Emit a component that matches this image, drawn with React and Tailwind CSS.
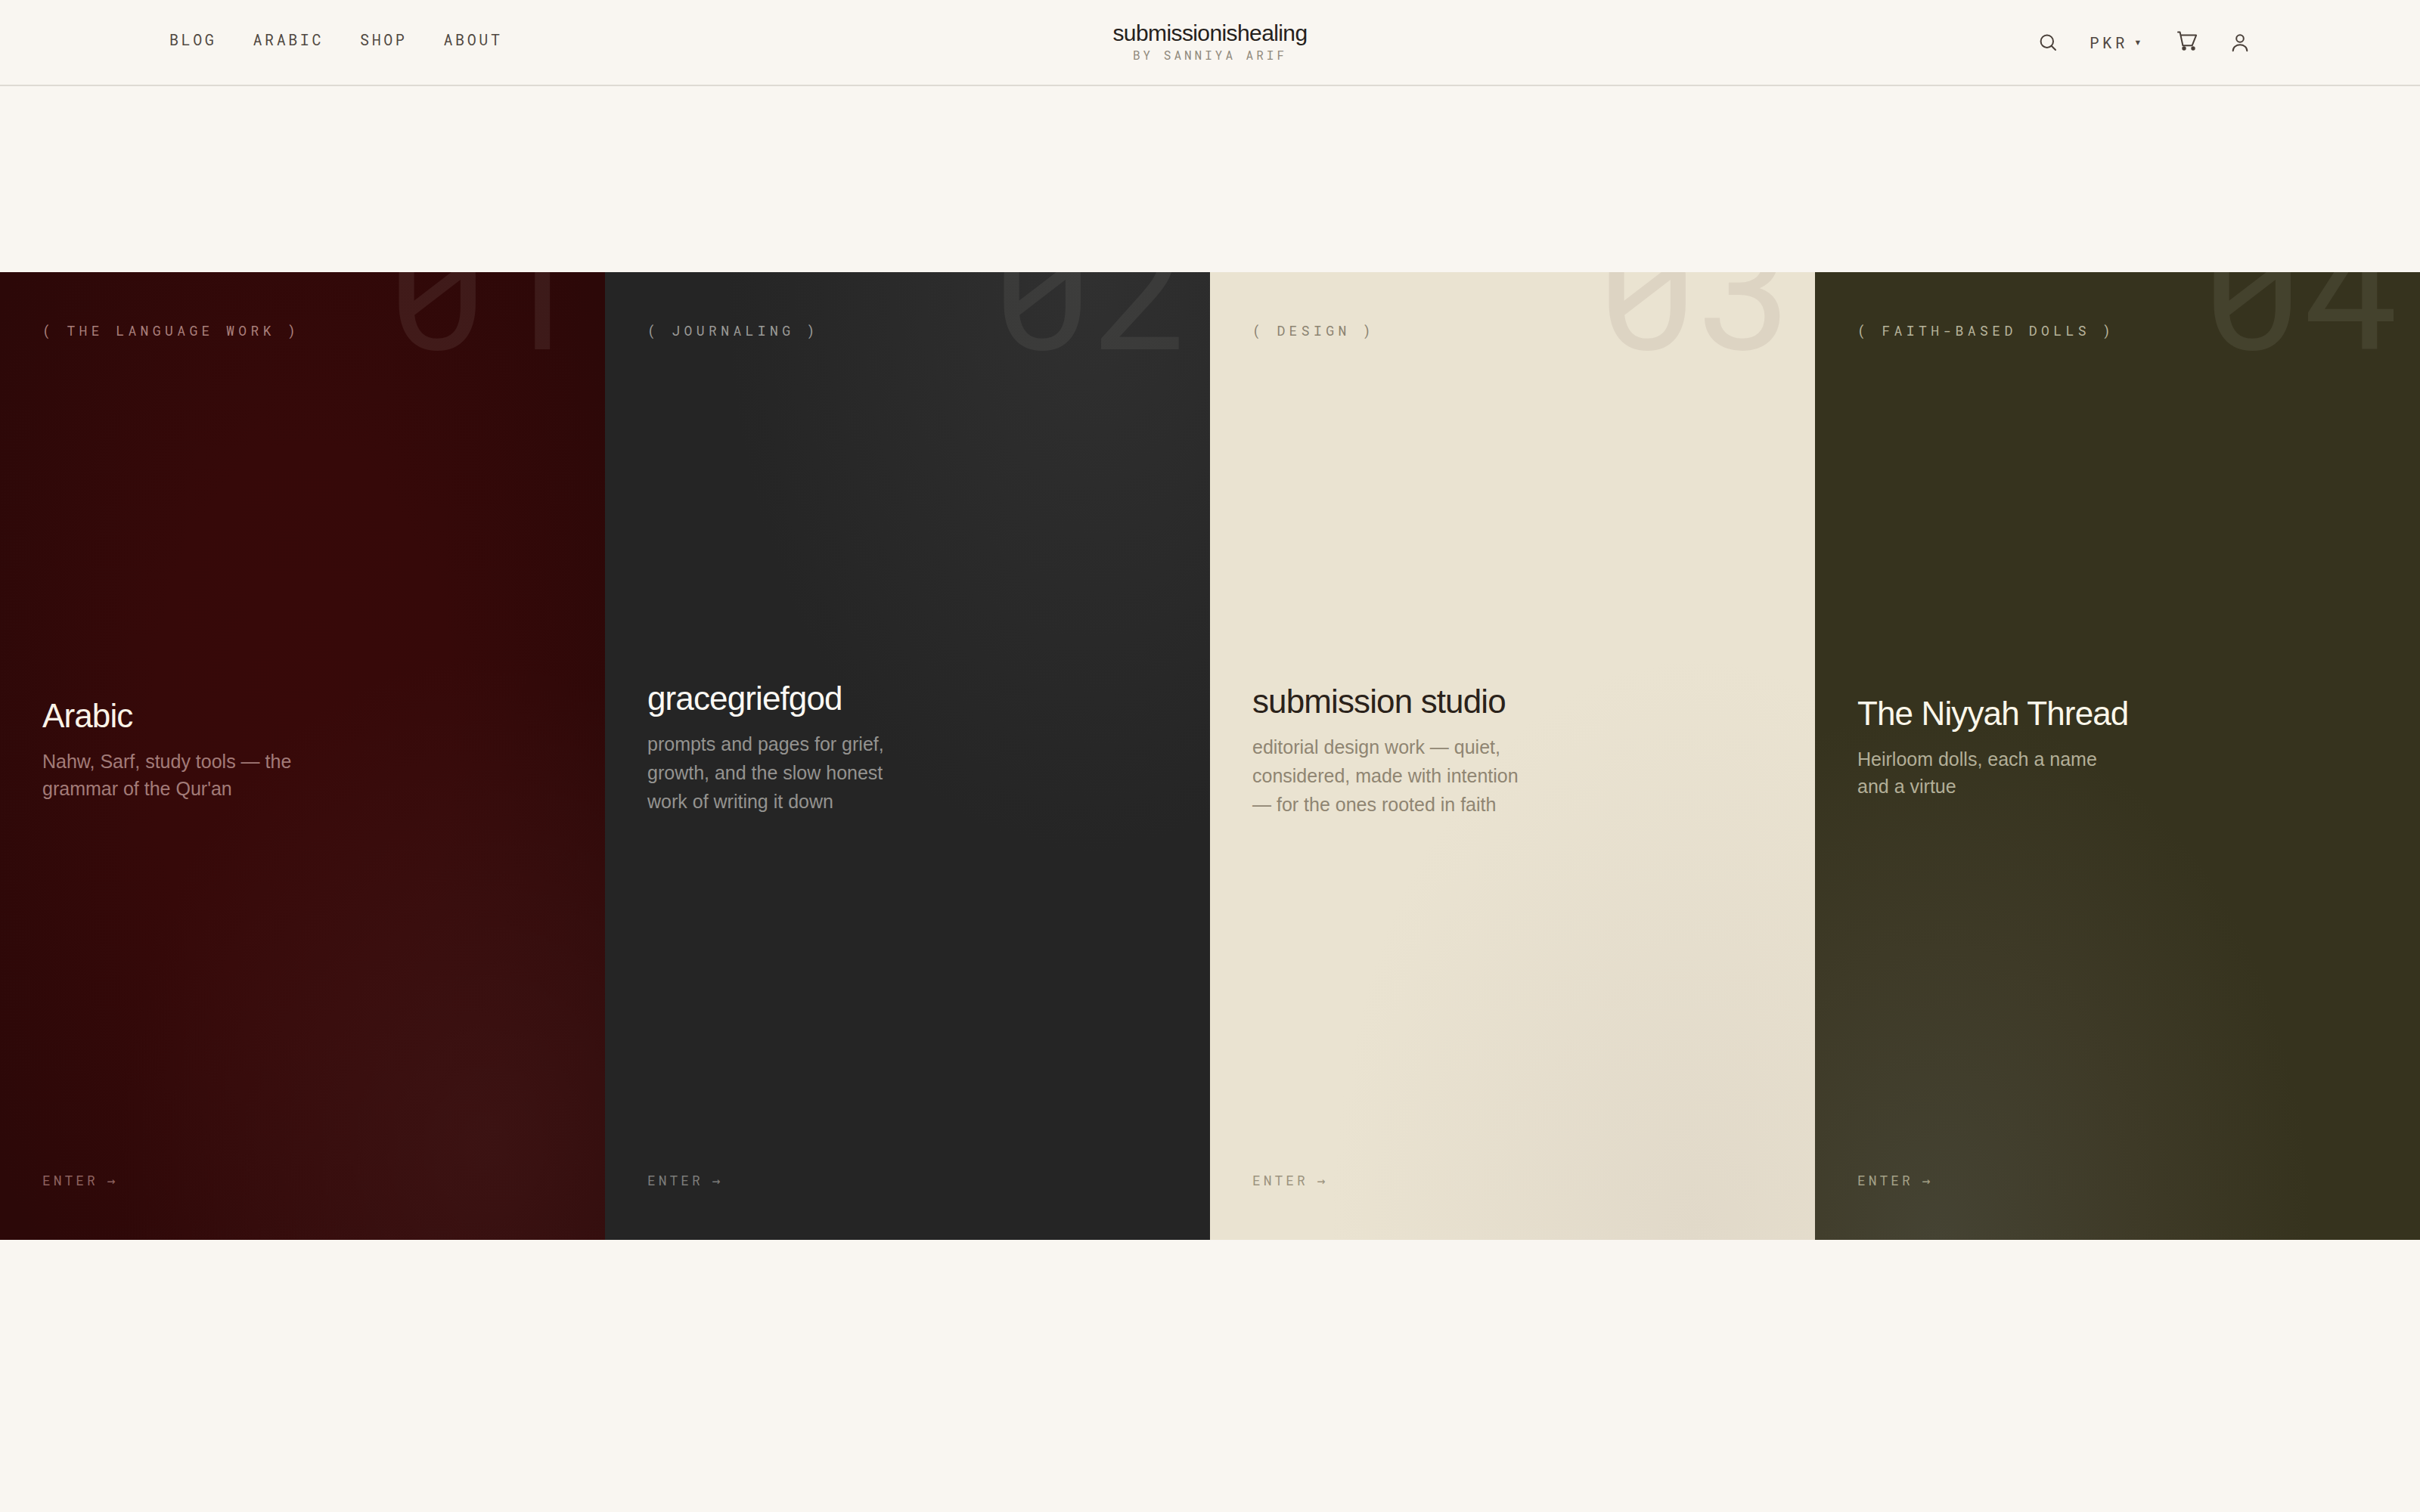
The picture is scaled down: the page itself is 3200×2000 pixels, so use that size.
import clsx from "clsx";

const navLinks = ["BLOG", "ARABIC", "SHOP", "ABOUT"];

const panels = [
  {
    number: "01",
    label: "( THE LANGUAGE WORK )",
    title: "Arabic",
    lines: ["Nahw, Sarf, study tools — the", "grammar of the Qur'an"],
    panelClass:
      "bg-[#2c0808] bg-[radial-gradient(ellipse_60%_50%_at_80%_90%,rgba(66,24,24,0.65),transparent),radial-gradient(ellipse_62%_75%_at_50%_48%,#380909_0%,#360909_40%,transparent_100%)]",
    numberClass: "text-[#f5ede0]/8",
    labelClass: "text-[#a97f7b]",
    titleClass: "text-[#fbf3e8]",
    bodyClass: "mt-[472px]",
    textClass: "mt-[18px] text-[#a27b78] leading-[36px]",
    enterClass: "text-[#8d625f]",
  },
  {
    number: "02",
    label: "( JOURNALING )",
    title: "gracegriefgod",
    lines: [
      "prompts and pages for grief,",
      "growth, and the slow honest",
      "work of writing it down",
    ],
    panelClass:
      "bg-[#252525] bg-[radial-gradient(ellipse_60%_60%_at_80%_0%,#303030,transparent)]",
    numberClass: "text-[#f5f0e0]/7",
    labelClass: "text-[#9b9a97]",
    titleClass: "text-[#fbf9f4]",
    bodyClass: "mt-[449px]",
    textClass: "mt-[17px] text-[#949390] leading-[38px]",
    enterClass: "text-[#7c7c7a]",
  },
  {
    number: "03",
    label: "( DESIGN )",
    title: "submission studio",
    lines: [
      "editorial design work — quiet,",
      "considered, made with intention",
      "— for the ones rooted in faith",
    ],
    panelClass:
      "bg-[#eae3d1] bg-[radial-gradient(ellipse_60%_60%_at_80%_100%,#e1d9c9,transparent)]",
    numberClass: "text-[#502828]/8",
    labelClass: "text-[#8c8371]",
    titleClass: "text-[#2a221a]",
    bodyClass: "mt-[453px]",
    textClass: "mt-[17px] text-[#8f8572] leading-[38px]",
    enterClass: "text-[#9c937f]",
  },
  {
    number: "04",
    label: "( FAITH-BASED DOLLS )",
    title: "The Niyyah Thread",
    lines: ["Heirloom dolls, each a name", "and a virtue"],
    panelClass:
      "bg-[#36331e] bg-[radial-gradient(ellipse_62%_55%_at_20%_100%,#454333,#3e3a27_55%,transparent)]",
    numberClass: "text-[#f5f0e0]/8",
    labelClass: "text-[#b8b49c]",
    titleClass: "text-[#fbf7ea]",
    bodyClass: "mt-[469px]",
    textClass: "mt-[18px] text-[#b3af98] leading-[36px]",
    enterClass: "text-[#a3a087]",
  },
];

const Icon = ({ children }) => (
  <svg
    width="28"
    height="28"
    viewBox="0 0 28 28"
    fill="none"
    stroke="currentColor"
    strokeWidth="2"
    strokeLinecap="round"
    strokeLinejoin="round"
    className="overflow-visible"
  >
    {children}
  </svg>
);

const SearchIcon = () => (
  <Icon>
    <circle cx="12.8" cy="12.7" r="8.2" />
    <path d="M18.7 18.7l5.3 5.3" />
  </Icon>
);

const CartIcon = () => (
  <Icon>
    <path d="M2 .5h2.6l3.8 17.8h12.2L26.1 4.6H5.5" />
    <circle cx="10" cy="22" r="1.7" fill="currentColor" />
    <circle cx="22" cy="22" r="1.7" fill="currentColor" />
  </Icon>
);

const UserIcon = () => (
  <Icon>
    <circle cx="14" cy="9" r="4.8" />
    <path d="M4.7 25.2c0-4.6 4.2-7.9 9.3-7.9s9.3 3.3 9.3 7.9" />
  </Icon>
);

const Header = () => (
  <header className="grid h-[114px] grid-cols-3 items-center border-b-2 border-[#dedad3] px-[224px]">
    <nav className="flex gap-12 pb-2 font-['Roboto_Mono'] text-[20px] leading-[30px] tracking-[0.18em] text-[#504841]">
      {navLinks.map((link) => (
        <a key={link} href="#">
          {link}
        </a>
      ))}
    </nav>

    <div className="flex flex-col items-center pt-px">
      <span className="text-[30px] leading-[30px] tracking-[-0.02em] text-[#25211c]">
        submissionishealing
      </span>
      <span className="mt-0.5 font-['Roboto_Mono'] text-[16px] leading-[24px] tracking-[0.25em] text-[#918a7d]">
        BY SANNIYA ARIF
      </span>
    </div>

    <div className="flex items-center justify-end gap-[42px] text-[#4a403a]">
      <SearchIcon />
      <button className="-ml-px flex w-[73px] items-center gap-2 font-['Roboto_Mono'] text-[21px] leading-[30px] tracking-[0.21em] text-[#504841]">
        PKR
        <span className="font-['DejaVu_Sans_Mono'] text-[16px] tracking-normal">▾</span>
      </button>
      <CartIcon />
      <UserIcon />
    </div>
  </header>
);

const Panel = ({ panel }) => (
  <a
    href="#"
    className={clsx(
      "relative flex flex-col overflow-hidden px-14 pt-16 pb-[65px] font-['Roboto_Mono']",
      panel.panelClass,
    )}
  >
    {/* Oversized number, cropped by the top edge */}
    <span
      className={clsx(
        "absolute top-[-93px] right-6 text-[220px] leading-none",
        panel.numberClass,
      )}
    >
      {panel.number}
    </span>

    <span className={clsx("text-[18px] leading-[27px] tracking-[0.3em]", panel.labelClass)}>
      {panel.label}
    </span>

    <div className={clsx("font-['Liberation_Sans']", panel.bodyClass)}>
      <h2 className={clsx("text-[44px] leading-[48px] tracking-[-0.02em]", panel.titleClass)}>
        {panel.title}
      </h2>
      <p className={clsx("text-[25px] whitespace-pre-line", panel.textClass)}>
        {panel.lines.join("\n")}
      </p>
    </div>

    <span
      className={clsx(
        "mt-auto flex items-baseline gap-3 text-[18px] leading-[27px] tracking-[0.22em]",
        panel.enterClass,
      )}
    >
      ENTER
      <span className="font-['DejaVu_Sans_Mono']">→</span>
    </span>
  </a>
);

const App = () => (
  <div className="h-[2000px] w-[3200px] bg-[#f9f6f1] font-['Liberation_Sans']">
    <Header />
    <main className="pt-[246px]">
      <div className="grid h-[1280px] grid-cols-4">
        {panels.map((panel) => (
          <Panel key={panel.number} panel={panel} />
        ))}
      </div>
    </main>
  </div>
);

export default App;
